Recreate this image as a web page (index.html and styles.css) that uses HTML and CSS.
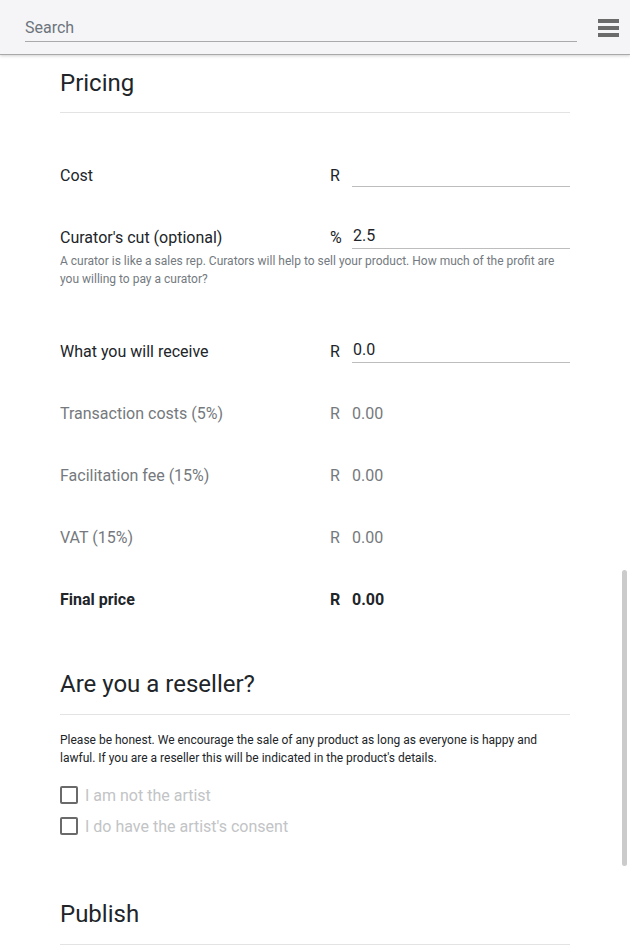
FILE: index.html
```html
<!DOCTYPE html>
<html lang="en">
<head>
<meta charset="utf-8">
<title>Pricing</title>
<link rel="stylesheet" href="styles.css">
</head>
<body>
<header class="topbar">
  <div class="search">Search</div>
  <button class="menu" aria-label="Menu">
    <svg width="22" height="18" viewBox="0 0 22 18"><rect x="0" y="0" width="21" height="4" fill="#6b6b6b"/><rect x="0" y="7" width="21" height="4" fill="#6b6b6b"/><rect x="0" y="14" width="21" height="4" fill="#6b6b6b"/></svg>
  </button>
</header>
<main class="content">
  <h4 class="title">Pricing</h4>
  <hr class="rule">

  <div class="row first">
    <div class="label">Cost</div>
    <div class="cur">R</div>
    <div class="field"></div>
  </div>
  <div class="row">
    <div class="label">Curator's cut (optional)</div>
    <div class="cur">%</div>
    <div class="field">2.5</div>
  </div>
  <p class="help">A curator is like a sales rep. Curators will help to sell your product. How much of the profit are you willing to pay a curator?</p>
  <div class="row after-help">
    <div class="label">What you will receive</div>
    <div class="cur">R</div>
    <div class="field">0.0</div>
  </div>
  <div class="row muted">
    <div class="label">Transaction costs (5%)</div>
    <div class="cur">R</div>
    <div class="value">0.00</div>
  </div>
  <div class="row muted">
    <div class="label">Facilitation fee (15%)</div>
    <div class="cur">R</div>
    <div class="value">0.00</div>
  </div>
  <div class="row muted">
    <div class="label">VAT (15%)</div>
    <div class="cur">R</div>
    <div class="value">0.00</div>
  </div>
  <div class="row strong">
    <div class="label">Final price</div>
    <div class="cur">R</div>
    <div class="value">0.00</div>
  </div>

  <h4 class="title section">Are you a reseller?</h4>
  <hr class="rule rule-reseller">
  <p class="note">Please be honest. We encourage the sale of any product as long as everyone is happy and lawful. If you are a reseller this will be indicated in the product's details.</p>
  <label class="check"><span class="box"></span>I am not the artist</label>
  <label class="check"><span class="box"></span>I do have the artist's consent</label>

  <h4 class="title publish">Publish</h4>
  <hr class="rule rule-publish">
</main>
<div class="scroll-thumb"></div>
</body>
</html>
```
FILE: styles.css
```css
html, body {
  margin: 0;
  padding: 0;
  overflow: hidden;
  height: 945px;
}
body {
  font-family: Roboto, "Noto Sans", sans-serif;
  font-size: 16px;
  color: #212529;
  background: #fff;
  position: relative;
}
.topbar {
  height: 54px;
  background: #f5f4f6;
  border-bottom: 1px solid #a9a9a9;
  box-shadow: 0 1px 3px rgba(0,0,0,0.18);
  display: flex;
  align-items: flex-start;
  padding: 0 10px 0 25px;
}
.search {
  flex: 1;
  margin-top: 17px;
  height: 24px;
  line-height: 22px;
  color: #6c757d;
  border-bottom: 1px solid #aaa;
  margin-right: 21px;
}
.menu {
  border: 0;
  background: none;
  padding: 0;
  margin-top: 19px;
  width: 22px;
  height: 18px;
  display: block;
}
.menu svg { display: block; }
.content {
  width: 510px;
  margin-left: 60px;
}
.title {
  font-size: 24px;
  font-weight: 400;
  line-height: 29px;
  margin: 14px 0 0;
  color: #212529;
}
.rule {
  border: 0;
  border-top: 1px solid #e3e3e3;
  margin: 14px 0 0;
}
.rule-reseller { margin-top: 15px; }
.rule-publish { margin-top: 15px; }
.row {
  display: flex;
  align-items: center;
  height: 24px;
  margin-top: 38px;
}
.row.first { margin-top: 50px; }
.row.after-help { margin-top: 51px; }
.label { width: 270px; }
.cur { width: 22px; }
.field {
  flex: 1;
  height: 24px;
  line-height: 24px;
  border-bottom: 1px solid #bdbdbd;
  box-sizing: border-box;
  padding-left: 1px;
}
.row:not(.first) .field { line-height: 22px; }
.value { flex: 1; }
.muted { color: #75797d; }
.strong { font-weight: 700; }
.help {
  font-size: 12px;
  line-height: 18px;
  color: #747a80;
  margin: 3px 0 0;
}
.title.section { margin-top: 59px; }
.note {
  font-size: 12px;
  line-height: 18px;
  margin: 16px 0 0;
  color: #212529;
}
.check {
  display: flex;
  align-items: center;
  height: 24px;
  color: #c2c4c6;
  margin-top: 7px;
}
.check:first-of-type { margin-top: 16px; }
.box {
  width: 14px;
  height: 14px;
  border: 2px solid #6a6a6a;
  border-radius: 2px;
  margin-right: 7px;
}
.title.publish { margin-top: 62px; }
.scroll-thumb {
  position: absolute;
  left: 622px;
  top: 570px;
  width: 5px;
  height: 296px;
  border-radius: 3px;
  background: #cbcbcb;
}
```
